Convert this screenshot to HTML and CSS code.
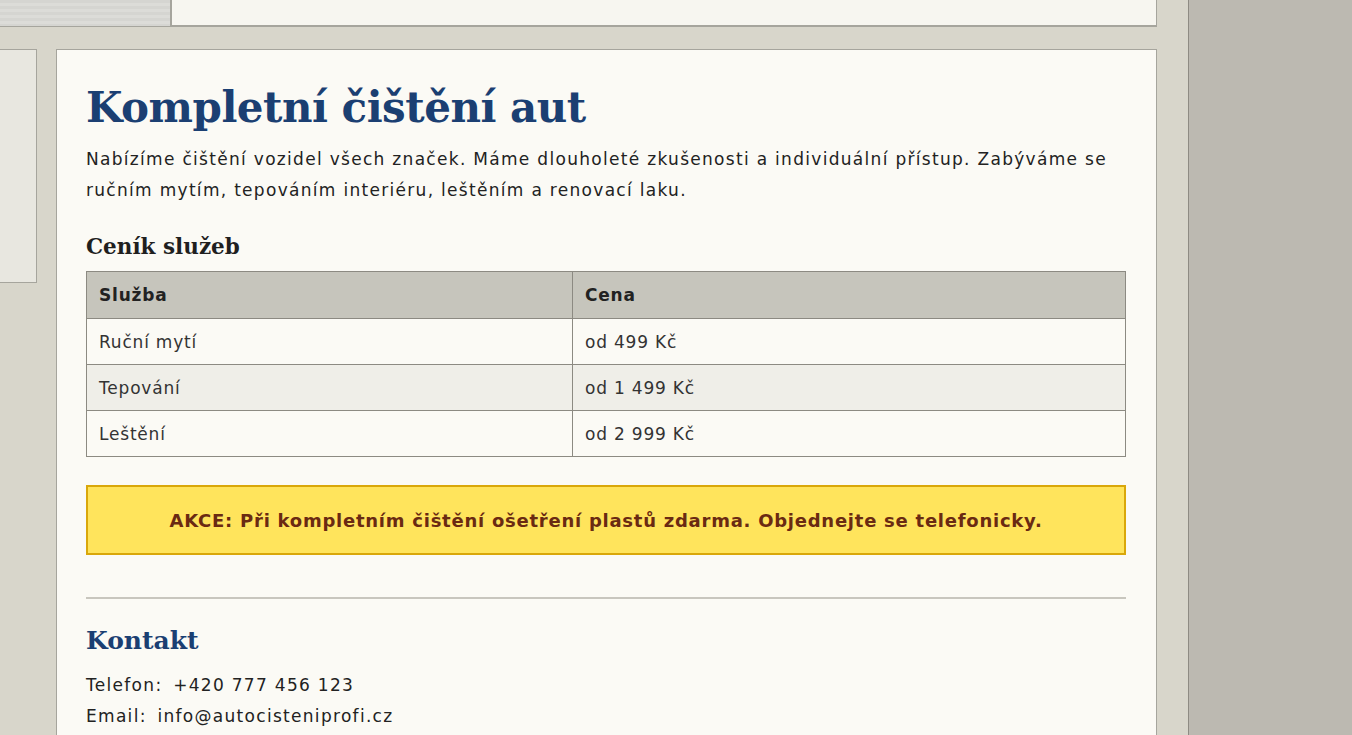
FILE: index.html
```html
<!DOCTYPE html>
<html lang="cs">
<head>
  <meta charset="UTF-8" />
  <title>Autočištění Profi</title>
  <meta name="viewport" content="width=device-width, initial-scale=1.0" />
  <link rel="stylesheet" href="styles.css">
</head>
<body>

  <div id="page">
    <!-- Header (scrolled out) -->
    <div id="header">
      <div id="logo"></div>
      <div id="nav"></div>
    </div>

    <div id="columns">
      <div id="sidebar"></div>

      <!-- Main content -->
      <div id="content">
        <h1>Kompletní čištění aut</h1>
        <p class="intro">Nabízíme čištění vozidel všech značek. Máme dlouholeté zkušenosti a individuální přístup. Zabýváme se ručním mytím, tepováním interiéru, leštěním a renovací laku.</p>

        <h3>Ceník služeb</h3>
        <table class="prices">
          <tr>
            <th class="col-service">Služba</th>
            <th>Cena</th>
          </tr>
          <tr>
            <td>Ruční mytí</td>
            <td>od 499 Kč</td>
          </tr>
          <tr>
            <td>Tepování</td>
            <td>od 1 499 Kč</td>
          </tr>
          <tr>
            <td>Leštění</td>
            <td>od 2 999 Kč</td>
          </tr>
        </table>

        <div class="promo">AKCE: Při kompletním čištění ošetření plastů zdarma. Objednejte se telefonicky.</div>

        <hr />

        <h2>Kontakt</h2>
        <p class="contact"><span class="label">Telefon:</span> +420 777 456 123</p>
        <p class="contact"><span class="label">Email:</span> info@autocisteniprofi.cz</p>
      </div>
    </div>
  </div>

</body>
</html>
```

FILE: styles.css
```css
body {
  margin: 0;
  background-color: #bcb9b1;
  font-family: "DejaVu Sans", Verdana, sans-serif;
  color: #222;
}

#page {
  width: 1188px;
  min-height: 735px;
  background-color: #d8d6cb;
  border-right: 1px solid #8e8b83;
}

/* Header */
#header {
  display: flex;
  height: 27px;
}

#logo {
  width: 170px;
  background: repeating-linear-gradient(to bottom, #d5d5d1 0, #d5d5d1 3px, #dcdcd8 3px, #dcdcd8 6px);
  border-right: 2px solid #a6a59d;
  border-bottom: 1px solid #a6a59d;
}

#nav {
  width: 984px;
  background-color: #f7f6f0;
  border-right: 1px solid #a6a59d;
  border-bottom: 2px solid #a6a59d;
}

#columns {
  display: flex;
  align-items: flex-start;
  gap: 19px;
  margin-top: 22px;
}

#sidebar {
  width: 36px;
  height: 232px;
  background-color: #e8e7e0;
  border-top: 1px solid #a6a59d;
  border-right: 1px solid #a6a59d;
  border-bottom: 1px solid #a6a59d;
}

/* Main content */
#content {
  width: 1040px;
  padding: 32px 30px 40px 29px;
  background-color: #fbfaf5;
  border: 1px solid #a6a59d;
}

h1 {
  margin: 0 0 10px;
  font-family: "DejaVu Serif", Georgia, serif;
  font-size: 42px;
  line-height: 52px;
  letter-spacing: -0.5px;
  font-weight: bold;
  color: #1b3f72;
}

.intro {
  margin: 0;
  font-size: 17px;
  line-height: 31px;
  letter-spacing: 1.3px;
}

h3 {
  margin: 28px 0 11px;
  font-family: "DejaVu Serif", Georgia, serif;
  font-size: 21.5px;
  line-height: 26px;
  color: #1f1f1f;
}

.prices {
  width: 1040px;
  border-collapse: collapse;
  font-size: 17px;
  letter-spacing: 0.8px;
  color: #333;
}

.prices th,
.prices td {
  height: 45px;
  padding: 0 12px;
  border: 1px solid #8c8a82;
  text-align: left;
}

.prices th {
  height: 46px;
  background-color: #c6c5bc;
  font-weight: bold;
  color: #222;
}

.prices .col-service {
  width: 461px;
}

.prices tr:nth-child(3) td {
  background-color: #efeee8;
}

.promo {
  margin-top: 28px;
  padding: 23px 10px 22px;
  background-color: #ffe45c;
  border: 2px solid #d9a70a;
  text-align: center;
  font-size: 18px;
  line-height: 21px;
  font-weight: bold;
  color: #6a2a12;
  letter-spacing: 0.75px;
}

hr {
  margin: 42px 0 0;
  border: none;
  border-top: 2px solid #c8c6be;
}

h2 {
  margin: 27px 0 15px;
  font-family: "DejaVu Serif", Georgia, serif;
  font-size: 25px;
  color: #1b3f72;
}

.contact {
  margin: 0;
  font-size: 17px;
  line-height: 31px;
  letter-spacing: 1.3px;
}

.contact .label {
  margin-right: 4px;
}
```
